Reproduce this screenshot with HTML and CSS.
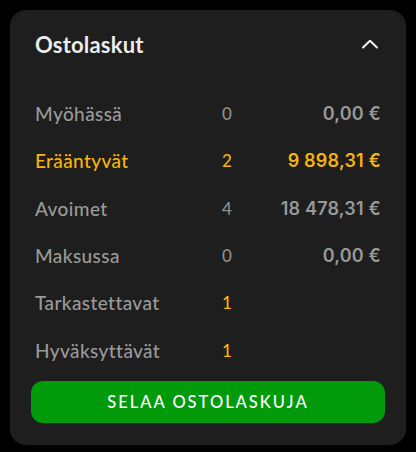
FILE: index.html
```html
<!DOCTYPE html>
<html lang="fi">
<head>
<meta charset="utf-8">
<link rel="stylesheet" href="styles.css">
</head>
<body>
<section class="card">
  <header class="card-head">
    <h2 class="title">Ostolaskut</h2>
    <svg class="chev" width="18" height="10" viewBox="0 0 18 10"><path d="M2 8.5 L9 1.8 L16 8.5" fill="none" stroke="#f2f2f2" stroke-width="2" stroke-linecap="round" stroke-linejoin="round"/></svg>
  </header>
  <div class="rows">
    <div class="row"><span class="label">Myöhässä</span><span class="count">0</span><span class="amount">0,00 €</span></div>
    <div class="row warn"><span class="label">Erääntyvät</span><span class="count">2</span><span class="amount">9 898,31 €</span></div>
    <div class="row"><span class="label">Avoimet</span><span class="count">4</span><span class="amount">18 478,31 €</span></div>
    <div class="row"><span class="label">Maksussa</span><span class="count">0</span><span class="amount">0,00 €</span></div>
    <div class="row"><span class="label">Tarkastettavat</span><span class="count hl">1</span><span class="amount"></span></div>
    <div class="row"><span class="label">Hyväksyttävät</span><span class="count hl">1</span><span class="amount"></span></div>
  </div>
  <button class="btn">SELAA OSTOLASKUJA</button>
</section>
</body>
</html>
```
FILE: styles.css
```css
html, body { margin: 0; padding: 0; background: #000; }
body { font-family: Lato, "Open Sans", sans-serif; }
.card {
  margin: 10px;
  height: 435px;
  box-sizing: border-box;
  background: #1e1e1e;
  border-radius: 16px;
  padding: 22px 21px 0;
  display: flex;
  flex-direction: column;
}
.card-head {
  display: flex;
  align-items: center;
  justify-content: space-between;
  height: 26px;
  padding: 0 4px;
}
.title {
  margin: 0;
  font-size: 22px;
  font-weight: 700;
  color: #ececec;
  line-height: 26px;
  letter-spacing: 0.2px;
}
.chev { margin-right: 2px; margin-top: -2px; }
.rows {
  margin-top: 32px;
  padding: 0 4px;
}
.row {
  display: grid;
  grid-template-columns: 187px 1fr auto;
  align-items: center;
  height: 47.3px;
  color: #9a9a9a;
}
.label { font-size: 19px; font-weight: 500; letter-spacing: 0.4px; }
.count { font-size: 17px; font-weight: 500; color: #8e8e8e; }
.amount { font-family: Inter, sans-serif; font-size: 18px; font-weight: 600; text-align: right; color: #989898; letter-spacing: 0.2px; }
.warn .label, .warn .count, .warn .amount, .count.hl { color: #f6b40c; }
.btn {
  margin-top: 7px;
  height: 42px;
  border: 0;
  border-radius: 12px;
  background: #009a0b;
  color: #fff;
  font-family: Lato, sans-serif;
  font-size: 16.5px;
  font-weight: 500;
  letter-spacing: 2px;
}
```
